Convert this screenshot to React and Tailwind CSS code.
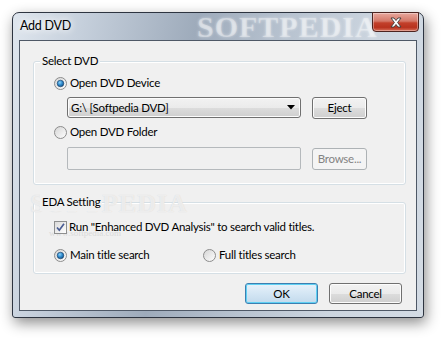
import React from "react";

const font = { fontFamily: 'Lato, "Noto Sans", sans-serif' };

const Radio = ({ checked }) => (
  <svg width="13" height="13" viewBox="0 0 13 13" className="shrink-0">
    <defs>
      <linearGradient id="rbg" x1="0" y1="0" x2="1" y2="1">
        <stop offset="0" stopColor="#d4d4d4" />
        <stop offset="1" stopColor="#ffffff" />
      </linearGradient>
      <radialGradient id="rdot" cx="0.4" cy="0.35" r="0.7">
        <stop offset="0" stopColor="#8fd3f7" />
        <stop offset="0.5" stopColor="#2f8bcf" />
        <stop offset="1" stopColor="#134d7f" />
      </radialGradient>
    </defs>
    <circle cx="6.5" cy="6.5" r="6" fill="url(#rbg)" stroke="#8c8c8c" />
    {checked && <circle cx="6.5" cy="6.5" r="3.3" fill="url(#rdot)" stroke="#1a3f66" strokeWidth="0.6" />}
  </svg>
);

const Checkbox = () => (
  <svg width="13" height="13" viewBox="0 0 13 13" className="shrink-0">
    <defs>
      <linearGradient id="cbg" x1="0" y1="0" x2="1" y2="1">
        <stop offset="0" stopColor="#d9d9d9" />
        <stop offset="1" stopColor="#ffffff" />
      </linearGradient>
    </defs>
    <rect x="0.5" y="0.5" width="12" height="12" fill="url(#cbg)" stroke="#8e8f8f" />
    <path d="M3 6.5 L5.3 9.2 L10 2.8" fill="none" stroke="#4a5d94" strokeWidth="1.7" />
  </svg>
);

const Button = ({ children, primary, disabled, className = "" }) => {
  if (disabled)
    return (
      <div className={`flex items-center justify-center rounded-[3px] border border-[#adb2b5] bg-[#f4f4f4] text-[#838383] ${className}`}>
        {children}
      </div>
    );
  if (primary)
    return (
      <div className={`flex items-center justify-center rounded-[3px] border border-[#3c7fb1] bg-gradient-to-b from-[#e8f2fa] via-[#d4e6f4] to-[#c3daec] shadow-[inset_0_0_0_1px_#5fd0f3] text-black ${className}`}>
        {children}
      </div>
    );
  return (
    <div className={`flex items-center justify-center rounded-[3px] border border-[#707070] bg-[linear-gradient(#f2f2f2_0%,#ebebeb_50%,#dddddd_51%,#cfcfcf_100%)] shadow-[inset_0_0_0_1px_#fcfcfc] text-black ${className}`}>
      {children}
    </div>
  );
};

const Group = ({ label, className = "", children, watermark }) => (
  <div className={`relative ml-[13px] mr-[11px] w-[373px] rounded-[3px] border border-[#d5dfe5] shadow-[inset_0_0_0_1px_#ffffff] ${className}`}>
    {watermark}
    <span className="absolute left-[6px] top-[-10px] bg-[#f0f0f0] px-[2px] leading-[18px]">{label}</span>
    {children}
  </div>
);

export default function App() {
  return (
    <div className="min-h-screen w-[446px] h-[340px] bg-white pl-[12px] pt-[12px] text-[11.5px] tracking-[-0.25px] text-black" style={font}>
      <div className="relative flex h-[306px] w-[412px] flex-col rounded-t-[7px] rounded-b-[3px] border border-[#2d3440] bg-[linear-gradient(100deg,#dfe6ee_0%,#c6d0dc_15%,#9eabbb_40%,#b8c3d0_60%,#cdd6e0_80%,#d3dbe4_100%)] px-[6px] pb-[6px] shadow-[2px_5px_14px_rgba(0,0,0,0.45)]">
        {/* title bar */}
        <div className="relative flex h-[27px] items-center pl-[1px]">
          <span className="absolute left-[178px] top-[-1px] text-[30px] font-bold leading-[30px] tracking-[1px] text-white/35 [text-shadow:0_0_3px_rgba(255,255,255,0.5)]" style={{ fontFamily: '"Liberation Serif", serif' }}>
            SOFTPEDIA
          </span>
          <span className="relative text-[12.5px] [text-shadow:0_0_6px_#fff,0_0_10px_#fff]">Add DVD</span>
        </div>
        <div className="absolute right-[4px] top-[-1px] flex h-[20px] w-[47px] items-center justify-center rounded-b-[4px] border border-[#4d2420] bg-[linear-gradient(#e8a89e_0%,#d47868_45%,#c2402b_55%,#b8321e_80%,#d8705a_100%)] shadow-[inset_0_0_0_1px_rgba(255,255,255,0.35)]">
          <svg width="14" height="11" viewBox="0 0 14 11">
            <path d="M2 1 H5 L7 3.5 L9 1 H12 L8.6 5.5 L12 10 H9 L7 7.5 L5 10 H2 L5.4 5.5 Z" fill="#fff" stroke="#3a3a3a" strokeWidth="0.9" strokeLinejoin="round" />
          </svg>
        </div>

        {/* client */}
        <div className="relative flex flex-1 flex-col border border-[#4e5866] bg-[#f0f0f0]">
          <Group label="Select DVD" className="mt-[20px] h-[124px]">
            <div className="flex flex-col pl-[20px]">
              <div className="mt-[13px] flex h-[16px] items-center gap-[3px]">
                <Radio checked />
                <span>Open DVD Device</span>
              </div>
              <div className="mt-[6px] flex h-[21px] items-center">
                <div className="ml-[13px] flex h-[21px] w-[234px] items-center justify-between rounded-[3px] border border-[#707070] bg-[linear-gradient(#f2f2f2_0%,#ebebeb_50%,#dddddd_51%,#cfcfcf_100%)] pl-[3px] pr-[5px] shadow-[inset_0_0_0_1px_#fcfcfc]">
                  <span>G:\ [Softpedia DVD]</span>
                  <svg width="8" height="5" viewBox="0 0 8 5">
                    <path d="M0 0 H8 L4 4.5 Z" fill="#000" />
                  </svg>
                </div>
                <Button className="ml-[11px] h-[22px] w-[55px]">Eject</Button>
              </div>
              <div className="mt-[6px] flex h-[16px] items-center gap-[3px]">
                <Radio />
                <span>Open DVD Folder</span>
              </div>
              <div className="mt-[7px] flex h-[23px] items-start">
                <div className="ml-[13px] h-[23px] w-[234px] rounded-[2px] border border-[#b5b9bc] bg-[#f0f0f0]" />
                <Button disabled className="ml-[11px] mt-[1px] h-[22px] w-[55px]">Browse...</Button>
              </div>
            </div>
          </Group>

          <Group
            label="EDA Setting"
            className="mt-[17px] h-[72px]"
            watermark={
              <>
                <span className="pointer-events-none absolute left-[-4px] top-[-12px] text-[26px] font-bold leading-[26px] tracking-[1px] text-white/60 [text-shadow:0_0_1px_#d0d0d0]" style={{ fontFamily: '"Liberation Serif", serif' }}>
                  SOFTPEDIA
                </span>
                <span className="pointer-events-none absolute left-[15px] top-[25px] text-[9px] leading-[10px] tracking-normal text-[#dadada]" style={{ fontFamily: '"Liberation Serif", serif' }}>
                  www.softpedia.com
                </span>
              </>
            }
          >
            <div className="relative flex flex-col pl-[20px]">
              <div className="mt-[16px] flex h-[16px] items-center gap-[2px]">
                <Checkbox />
                <span>Run "Enhanced DVD Analysis" to search valid titles.</span>
              </div>
              <div className="mt-[12px] flex h-[16px] items-center">
                <div className="flex w-[149px] items-center gap-[3px]">
                  <Radio checked />
                  <span>Main title search</span>
                </div>
                <div className="flex items-center gap-[3px]">
                  <Radio />
                  <span>Full titles search</span>
                </div>
              </div>
            </div>
          </Group>

          <div className="mt-[9px] flex justify-end gap-[11px] pr-[14px]">
            <Button primary className="h-[21px] w-[73px]">OK</Button>
            <Button className="h-[21px] w-[73px]">Cancel</Button>
          </div>
        </div>
      </div>
    </div>
  );
}
